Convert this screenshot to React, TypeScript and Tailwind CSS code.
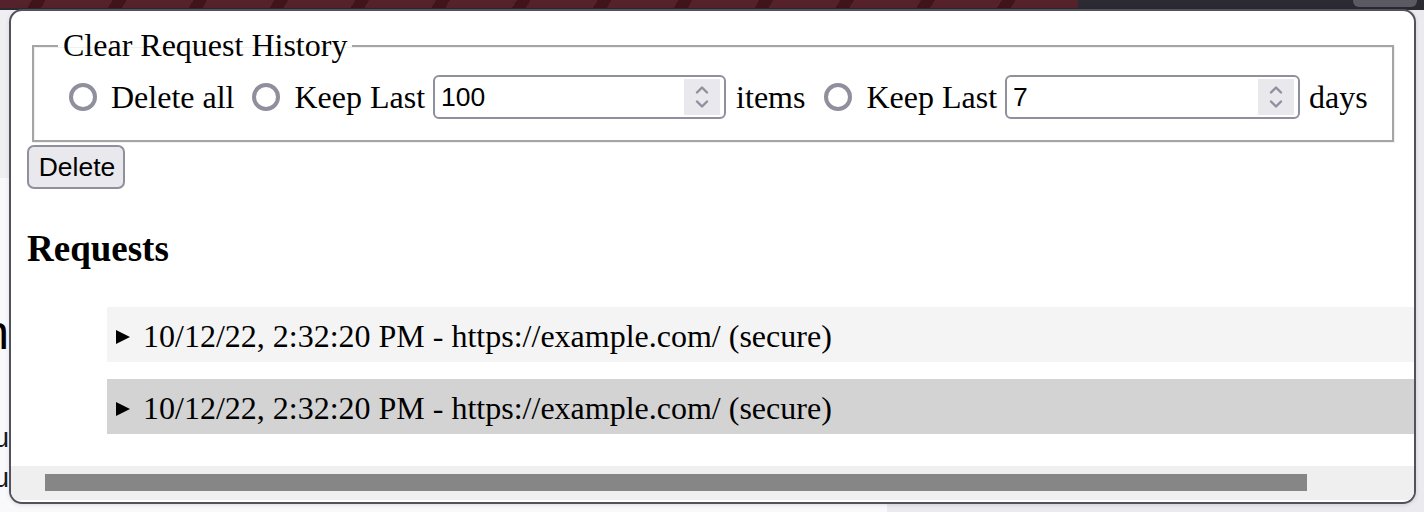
import React from 'react';

const serif = "font-['Liberation_Serif',serif]";
const sans = "font-['Liberation_Sans',sans-serif]";

const Radio = ({ className = '' }: { className?: string }) => (
  <span className={`inline-block h-[28px] w-[28px] shrink-0 rounded-full border-[4px] border-[#8f8f9d] bg-white ${className}`} />
);

const NumberBox = ({ value, className }: { value: string; className: string }) => (
  <div className={`flex h-[44px] shrink-0 items-center rounded-[6px] border-2 border-[#8f8f9d] bg-white pl-[6px] pr-[4px] ${className}`}>
    <span className={`${sans} flex-1 text-[26.5px] leading-none text-black`}>{value}</span>
    <span className="flex h-[36px] w-[36px] flex-col items-center justify-center gap-[6px] bg-[#e9e9ed]">
      <svg width="14" height="9" viewBox="0 0 14 9" fill="none">
        <path d="M2 7.5 L7 2.5 L12 7.5" stroke="#8f8f9d" strokeWidth="2.4" strokeLinecap="round" strokeLinejoin="round" />
      </svg>
      <svg width="14" height="9" viewBox="0 0 14 9" fill="none">
        <path d="M2 1.5 L7 6.5 L12 1.5" stroke="#8f8f9d" strokeWidth="2.4" strokeLinecap="round" strokeLinejoin="round" />
      </svg>
    </span>
  </div>
);

const RequestRow = ({ text, bg, className = '' }: { text: string; bg: string; className?: string }) => (
  <div className={`ml-[80px] flex h-[55px] items-start pl-[9px] pt-[11px] ${bg} ${className}`}>
    <svg className="mt-[12px] shrink-0" width="14" height="14" viewBox="0 0 14 14">
      <polygon points="0,0 14,7 0,14" fill="#000" />
    </svg>
    <span className={`${serif} ml-[13px] whitespace-nowrap text-[32px] leading-[37px] text-black`}>{text}</span>
  </div>
);

// slivers of the page behind the popup, only the right end shows
const Sliver = ({ text, className }: { text: string; className: string }) => (
  <div className="flex w-[9px] justify-end overflow-hidden whitespace-nowrap">
    <span className={className}>{text}</span>
  </div>
);

export default function App() {
  const entry = '10/12/22, 2:32:20 PM - https://example.com/ (secure)';

  return (
    <div className="relative flex h-[512px] w-[1424px] flex-col overflow-hidden bg-[#f9f9fb]">
      {/* browser chrome behind */}
      <div className="flex h-[8px] shrink-0">
        <div className="flex-1 bg-[repeating-linear-gradient(-60deg,#55212a_0px,#55212a_58px,#41141a_58px,#41141a_70px)]" />
        <div className="w-[346px] bg-[#2b2a33] pl-[275px]">
          <div className="h-[7px] w-[64px] rounded-b-[6px] bg-[#5b5a63]" />
        </div>
      </div>
      <div className="h-[2px] shrink-0 bg-[#2b2a33]" />

      <div className="flex flex-1">
        <div className="flex w-[887px] flex-col bg-[#f9f9fb]">
          <div className="h-[168px] bg-[#efeff2]" />
          <div className="mt-[126px]">
            <Sliver text="Domain" className={`${sans} text-[48px] leading-[58px] text-black`} />
          </div>
          <div className="mt-[58px]">
            <Sliver text="Menu" className={`${sans} text-[28px] leading-[36px] text-[#1c1b22]`} />
          </div>
          <div className="mt-[4px]">
            <Sliver text="Abou" className={`${sans} text-[28px] leading-[36px] text-[#1c1b22]`} />
          </div>
        </div>
        <div className="flex-1 bg-[#ebebef]" />
      </div>

      {/* popup */}
      <div className="absolute left-[9px] top-[9px] flex h-[495px] w-[1407px] flex-col overflow-hidden rounded-[13px] border-2 border-[#52525e] bg-white shadow-[0_1px_4px_rgba(0,0,0,0.12)]">
        <div className="flex flex-1 flex-col pt-[16px]">
          <div className="px-[16px]">
            <fieldset className="mx-[5px] border-2 border-[#a5a5a5] pb-[21px] pl-[24px] pr-[24px] pt-[11px] shadow-[inset_1px_1px_0_#f0f0f0,1px_1px_0_#f0f0f0]">
              <legend className={`${serif} px-[5px] text-[32px] leading-[37px] text-black`}>Clear Request History</legend>
              <div className={`${serif} flex h-[44px] items-center text-[32px] leading-[37px] text-black`}>
                <Radio className="ml-[11px]" />
                <span className="ml-[14px] whitespace-nowrap">Delete all</span>
                <Radio className="ml-[18px]" />
                <span className="ml-[14px] whitespace-nowrap">Keep Last</span>
                <NumberBox value="100" className="ml-[8px] w-[293px]" />
                <span className="ml-[10px]">items</span>
                <Radio className="ml-[19px]" />
                <span className="ml-[14px] whitespace-nowrap">Keep Last</span>
                <NumberBox value="7" className="ml-[8px] w-[295px]" />
                <span className="ml-[9px]">days</span>
              </div>
            </fieldset>
            <button className={`${sans} mt-[3px] flex h-[44px] w-[98px] items-center justify-center rounded-[7px] border-2 border-[#8f8f9d] bg-[#e9e9ed] pl-[2px] text-[26.5px] leading-none text-black`}>
              Delete
            </button>
            <h2 className={`${serif} mt-[38px] text-[37px] font-bold leading-[43px] text-black`}>Requests</h2>
          </div>

          <div className="mt-[37px] pl-[16px]">
            <RequestRow text={entry} bg="bg-[#f4f4f4]" />
            <RequestRow text={entry} bg="bg-[#d3d3d3]" className="mt-[17px]" />
          </div>

          <div className="flex-1" />
          <div className="mb-[2px] h-[34px] bg-[#efefef] pl-[34px] pt-[8px]">
            <div className="h-[17px] w-[1262px] bg-[#868686]" />
          </div>
        </div>
      </div>
    </div>
  );
}
